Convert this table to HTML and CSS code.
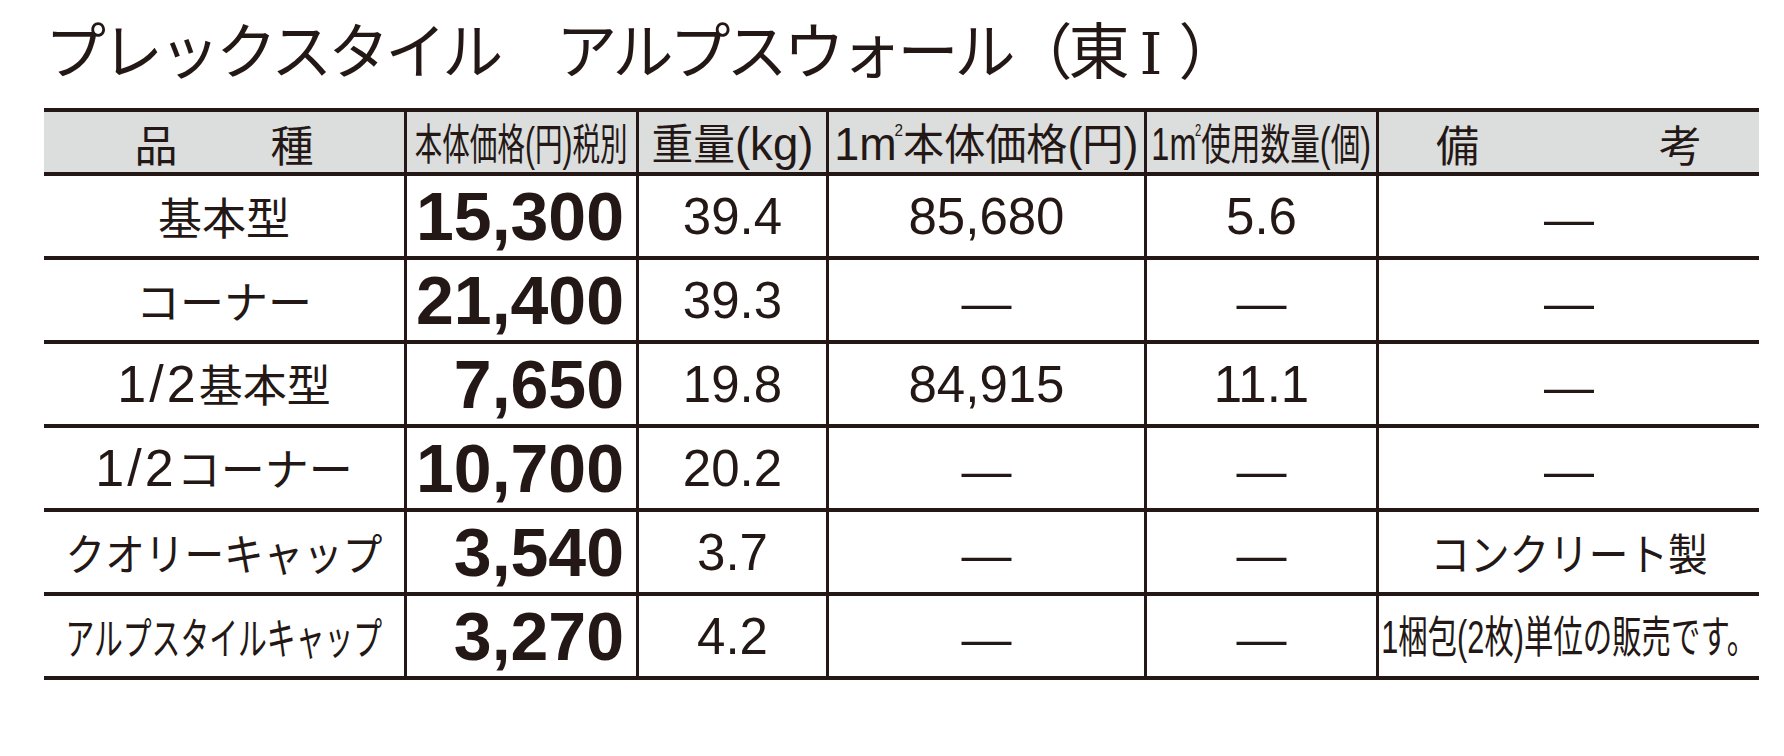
FILE: index.html
```html
<!DOCTYPE html>
<html lang="ja">
<head>
<meta charset="utf-8">
<title>プレックスタイル アルプスウォール（東Ⅰ）</title>
<link rel="stylesheet" href="styles.css">
</head>
<body>
<div class="page">
  <h1 class="title">プレックスタイル　アルプスウォール（東<span class="roman">Ⅰ</span>）</h1>
  <div class="table">
    <div class="row head">
      <div class="cell c-name"><span class="pair pair-name"><span>品</span><span>種</span></span></div>
      <div class="cell"><span class="fit fit-price">本体価格<span class="lat">(</span>円<span class="lat">)</span>税別</span></div>
      <div class="cell"><span class="fit fit-weight">重量<span class="lat">(kg)</span></span></div>
      <div class="cell"><span class="fit fit-m2price"><span class="lat">1m</span><span class="sup">2</span>本体価格<span class="lat">(</span>円<span class="lat">)</span></span></div>
      <div class="cell"><span class="fit fit-m2qty"><span class="lat">1m</span><span class="sup">2</span>使用数量<span class="lat">(</span>個<span class="lat">)</span></span></div>
      <div class="cell"><span class="pair pair-note"><span>備</span><span>考</span></span></div>
    </div>
    <div class="row">
      <div class="cell c-name"><span class="jp">基本型</span></div>
      <div class="cell c-price"><span class="big">15,300</span></div>
      <div class="cell"><span class="num">39.4</span></div>
      <div class="cell"><span class="num">85,680</span></div>
      <div class="cell"><span class="num">5.6</span></div>
      <div class="cell"><span class="dash">—</span></div>
    </div>
    <div class="row">
      <div class="cell c-name"><span class="jp">コーナー</span></div>
      <div class="cell c-price"><span class="big">21,400</span></div>
      <div class="cell"><span class="num">39.3</span></div>
      <div class="cell"><span class="dash">—</span></div>
      <div class="cell"><span class="dash">—</span></div>
      <div class="cell"><span class="dash">—</span></div>
    </div>
    <div class="row">
      <div class="cell c-name"><span class="jp"><span class="lat-big">1/2</span>基本型</span></div>
      <div class="cell c-price"><span class="big">7,650</span></div>
      <div class="cell"><span class="num">19.8</span></div>
      <div class="cell"><span class="num">84,915</span></div>
      <div class="cell"><span class="num">11.1</span></div>
      <div class="cell"><span class="dash">—</span></div>
    </div>
    <div class="row">
      <div class="cell c-name"><span class="jp"><span class="lat-big">1/2</span>コーナー</span></div>
      <div class="cell c-price"><span class="big">10,700</span></div>
      <div class="cell"><span class="num">20.2</span></div>
      <div class="cell"><span class="dash">—</span></div>
      <div class="cell"><span class="dash">—</span></div>
      <div class="cell"><span class="dash">—</span></div>
    </div>
    <div class="row">
      <div class="cell c-name"><span class="jp fit-quarry">クオリーキャップ</span></div>
      <div class="cell c-price"><span class="big">3,540</span></div>
      <div class="cell"><span class="num">3.7</span></div>
      <div class="cell"><span class="dash">—</span></div>
      <div class="cell"><span class="dash">—</span></div>
      <div class="cell"><span class="jp fit-concrete">コンクリート製</span></div>
    </div>
    <div class="row">
      <div class="cell c-name"><span class="jp fit-alps">アルプスタイルキャップ</span></div>
      <div class="cell c-price"><span class="big">3,270</span></div>
      <div class="cell"><span class="num">4.2</span></div>
      <div class="cell"><span class="dash">—</span></div>
      <div class="cell"><span class="dash">—</span></div>
      <div class="cell"><span class="jp fit-sale"><span class="lat-mid">1</span>梱包<span class="lat-mid">(2</span>枚<span class="lat-mid">)</span>単位の販売です。</span></div>
    </div>
  </div>
</div>
</body>
</html>
```

FILE: styles.css
```css
html, body {
  margin: 0;
  padding: 0;
  background: #ffffff;
}

body {
  color: #231815;
  font-family: "Noto Sans CJK JP", sans-serif;
}

.page {
  padding: 17px 0 0 44px;
  width: 1715px;
}

.title {
  height: 61px;
  margin: 0 0 30px 1px;
  font-family: "Noto Sans CJK JP", sans-serif;
  font-weight: 400;
  font-size: 61px;
  line-height: 61px;
  letter-spacing: -4px;
  white-space: nowrap;
}

.roman {
  font-family: "DejaVu Serif", "Liberation Serif", serif;
  font-size: 58px;
  font-weight: 400;
  line-height: 0;
  margin: 0 16px 0 14px;
  letter-spacing: 0;
}

.table {
  border-top: 4px solid #231815;
}

.row {
  display: grid;
  grid-template-columns: 360px 232px 190px 318px 232px 383px;
  height: 80px;
  border-bottom: 4px solid #231815;
}

.row.head {
  height: 60px;
  background: #dcdddd;
}

.cell {
  display: flex;
  align-items: center;
  justify-content: center;
  border-left: 3px solid #231815;
  white-space: nowrap;
  overflow: visible;
  min-width: 0;
}

.cell.c-name {
  border-left: none;
}

.cell.c-price {
  justify-content: flex-end;
  padding-right: 12px;
}

.head .cell {
  font-size: 43px;
  line-height: 1;
  padding-top: 3px;
}

.lat {
  font-family: "Liberation Sans", sans-serif;
  font-size: 47px;
}

.lat-big {
  font-family: "Liberation Sans", sans-serif;
  font-size: 52px;
  letter-spacing: 3px;
}

.lat-mid {
  font-family: "Liberation Sans", sans-serif;
  font-size: 46px;
}

.pair {
  display: flex;
}

.pair-name {
  gap: 93px;
}

.pair-note {
  gap: 180px;
}

.fit {
  display: inline-block;
  transform-origin: center center;
}

.fit-price {
  transform: scaleX(0.64);
}

.fit-weight {
  transform: scaleX(0.97);
}

.fit-m2price {
  transform: scaleX(0.955);
}

.fit-m2qty {
  transform: scaleX(0.69);
}

.sup {
  font-family: "Liberation Sans", sans-serif;
  font-size: 16px;
  vertical-align: 24px;
  margin-left: -2px;
}

.jp {
  display: inline-block;
  font-size: 44px;
  line-height: 1;
  transform-origin: center center;
}

.fit-quarry {
  transform: scaleX(0.9);
}

.fit-alps {
  transform: scaleX(0.655);
}

.fit-concrete {
  transform: scaleX(0.9);
}

.fit-sale {
  transform: scaleX(0.668);
}

.big {
  font-family: "Liberation Sans", sans-serif;
  font-weight: 700;
  font-size: 68px;
  line-height: 1;
}

.num {
  font-family: "Liberation Sans", sans-serif;
  font-size: 51px;
  line-height: 1;
}

.dash {
  font-family: "Liberation Sans", sans-serif;
  font-size: 50px;
  line-height: 1;
  position: relative;
  top: 3px;
}
```
